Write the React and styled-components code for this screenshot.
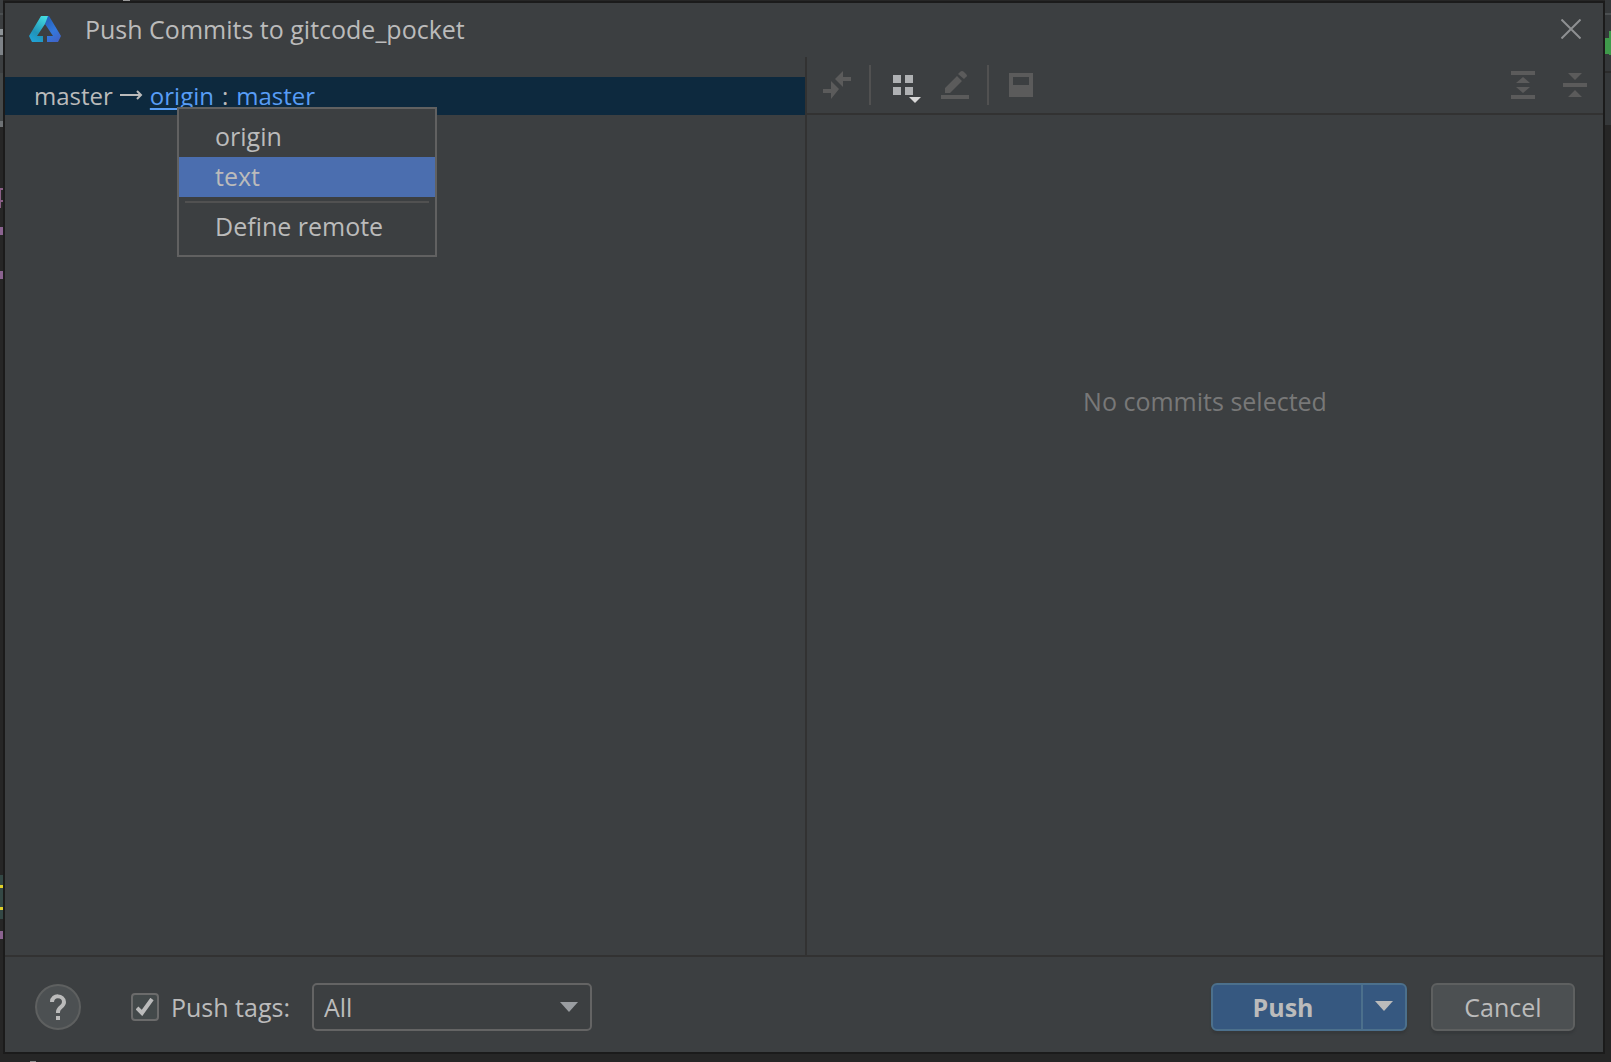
import React, { useState } from 'react';
import styled, { createGlobalStyle } from 'styled-components';

const GlobalStyle = createGlobalStyle`
  * {
    box-sizing: border-box;
  }

  body {
    margin: 0;
    background: #262626;
    color: #bbbbbb;
    font-family: 'Open Sans', 'Noto Sans', sans-serif;
    font-size: 25px;
    line-height: 32px;
  }

  button,
  select,
  input {
    margin: 0;
    font: inherit;
    color: inherit;
  }
`;

/* slivers of the editor that stay visible round the dialog */
const Backdrop = styled.div`
  display: flex;
  min-height: 100vh;
  padding: 1px 6px 8px 3px;
  background:
    linear-gradient(#9a9a9a, #9a9a9a) 123px 0 / 7px 1px no-repeat,
    linear-gradient(#8a8a8a, #8a8a8a) 30px 100% / 6px 1px no-repeat,
    linear-gradient(#4b4f51, #4b4f51) 0 13px / 3px 2px no-repeat,
    linear-gradient(#8d9397, #8d9397) 0 29px / 3px 6px no-repeat,
    linear-gradient(#7d8287, #7d8287) 0 37px / 3px 18px no-repeat,
    linear-gradient(#45494a, #45494a) 0 73px / 3px 48px no-repeat,
    linear-gradient(#6e7275, #6e7275) 0 121px / 3px 6px no-repeat,
    linear-gradient(#8a5f86, #8a5f86) 0 190px / 1px 18px no-repeat,
    linear-gradient(#8a5f86, #8a5f86) 0 188px / 3px 2px no-repeat,
    linear-gradient(#8a5f86, #8a5f86) 0 200px / 3px 2px no-repeat,
    linear-gradient(#8a6390, #8a6390) 0 227px / 3px 8px no-repeat,
    linear-gradient(#8a6390, #8a6390) 0 271px / 3px 8px no-repeat,
    linear-gradient(#e0d02a, #e0d02a) 0 885px / 3px 3px no-repeat,
    linear-gradient(#e0d02a, #e0d02a) 0 907px / 3px 3px no-repeat,
    linear-gradient(#344845, #344845) 0 875px / 3px 44px no-repeat,
    linear-gradient(#8a6390, #8a6390) 0 931px / 3px 8px no-repeat,
    linear-gradient(#3c3f41, #3c3f41) 0 0 / 3px 127px no-repeat,
    linear-gradient(#3f9a4b, #3f9a4b) 100% 31px / 2px 24px no-repeat,
    linear-gradient(#3f9a4b, #3f9a4b) 100% 38px / 6px 16px no-repeat,
    linear-gradient(#4b4f51, #4b4f51) 100% 13px / 6px 2px no-repeat,
    linear-gradient(#2b2b2b, #2b2b2b) 100% 71px / 6px 2px no-repeat,
    linear-gradient(#35383a, #35383a) 100% 0 / 6px 125px no-repeat,
    #262626;
`;

const Dialog = styled.main`
  flex: 1;
  display: flex;
  flex-direction: column;
  border: 2px solid #1b1b1b;
  background: #3c3f41;
`;

const TitleBar = styled.header`
  display: flex;
  align-items: center;
  height: 54px;
  padding: 0 22px 2px 24px;
`;

const Title = styled.h1`
  flex: 1;
  margin: 0 0 0 24px;
  font-size: 25px;
  font-weight: 400;
`;

const IconButton = styled.button`
  display: flex;
  padding: 0;
  border: 0;
  background: none;
  color: ${({ $active }) => ($active ? '#afb1b3' : '#5b5b5b')};
`;

const CloseButton = styled(IconButton)`
  color: #8e9092;
`;

const Panes = styled.div`
  flex: 1;
  display: grid;
  grid-template-columns: 400fr 399fr;
`;

const RepoPane = styled.section`
  padding-top: 20px;
`;

const RepoRow = styled.div`
  position: relative;
  display: flex;
  align-items: center;
  gap: 7px;
  height: 38px;
  padding-left: 29px;
  background: #0d293e;
  font-size: 24px;
`;

const Target = styled.span`
  display: flex;
  gap: 8px;
`;

const BranchLink = styled.a`
  color: #589df6;
  text-decoration: ${({ $underlined }) => ($underlined ? 'underline' : 'none')};
  text-decoration-thickness: 2px;
  text-underline-offset: 3px;
  text-decoration-skip-ink: none;
`;

const Menu = styled.div`
  position: absolute;
  z-index: 1;
  top: 30px;
  left: 172px;
  width: 260px;
  padding: 8px 0;
  border: 2px solid #616161;
  background: #3c3f41;
  font-size: 25px;
`;

const MenuItem = styled.button`
  display: block;
  width: 100%;
  height: 40px;
  padding: 0 36px 2px;
  border: 0;
  background: ${({ $selected }) => ($selected ? '#4b6eaf' : 'none')};
  text-align: left;
`;

const MenuSeparator = styled.hr`
  height: 2px;
  margin: 4px 6px;
  border: 0;
  background: #515151;
`;

const CommitPane = styled.section`
  display: flex;
  flex-direction: column;
  border-left: 2px solid #323232;
`;

const Toolbar = styled.div`
  display: flex;
  align-items: center;
  height: 58px;
  padding: 0 12px 0 14px;
  border-bottom: 2px solid #323232;
`;

const ToolbarGroup = styled.div`
  display: flex;
  gap: 20px;
`;

const ToolbarSeparator = styled.span`
  width: 2px;
  height: 40px;
  margin: 0 16px;
  background: #515151;
`;

const Spacer = styled.span`
  flex: 1;
`;

const EmptyText = styled.p`
  margin: 270px 0 0;
  color: #787878;
  text-align: center;
`;

const Footer = styled.footer`
  display: flex;
  align-items: center;
  height: 97px;
  padding: 5px 28px 0 30px;
  border-top: 2px solid #323232;
`;

const HelpButton = styled.button`
  display: flex;
  align-items: center;
  justify-content: center;
  width: 46px;
  height: 46px;
  margin-right: 50px;
  padding: 0;
  border: 2px solid #5e6060;
  border-radius: 50%;
  background: #4c5052;
`;

const Checkbox = styled.input`
  appearance: none;
  width: 28px;
  height: 28px;
  border: 2px solid #6b6b6b;
  border-radius: 4px;
  background: #43494a;
`;

const CheckHolder = styled.span`
  display: grid;

  > * {
    grid-area: 1 / 1;
    place-self: center;
  }

  svg {
    pointer-events: none;
  }
`;

const CheckLabel = styled.label`
  margin: 0 22px 0 12px;
`;

const SelectHolder = styled.span`
  display: grid;
  align-items: center;

  > * {
    grid-area: 1 / 1;
  }

  svg {
    justify-self: end;
    margin-right: 14px;
    pointer-events: none;
  }
`;

const Select = styled.select`
  appearance: none;
  width: 280px;
  height: 48px;
  padding: 0 40px 0 10px;
  border: 2px solid #646464;
  border-radius: 5px;
  background: #3c3f41;
`;

const SplitButton = styled.div`
  display: flex;
  height: 48px;
  border: 2px solid #4c708c;
  border-radius: 6px;
  background: #365880;
  box-shadow: 0 3px 2px #36393b;
`;

const PushButton = styled.button`
  width: 148px;
  padding: 0 8px 0 0;
  border: 0;
  background: none;
  font-weight: 700;
`;

const PushMore = styled.button`
  display: flex;
  align-items: center;
  justify-content: center;
  width: 44px;
  padding: 0 0 2px;
  border: 0;
  border-left: 2px solid #4c708c;
  background: none;
`;

const CancelButton = styled.button`
  width: 144px;
  height: 48px;
  margin-left: 24px;
  padding: 0;
  border: 2px solid #5e6060;
  border-radius: 6px;
  background: #4c5052;
  box-shadow: 0 3px 2px #36393b;
`;

const Logo = () => (
  <svg width="32" height="26" viewBox="0 0 32 26" aria-hidden="true">
    <defs>
      <linearGradient id="left" x1="0.7" y1="0" x2="0.2" y2="1">
        <stop offset="0" stopColor="#43dbe0" />
        <stop offset="0.65" stopColor="#2193b8" />
        <stop offset="1" stopColor="#20a3d8" />
      </linearGradient>
      <linearGradient id="right" x1="0.2" y1="0" x2="0.7" y2="1">
        <stop offset="0" stopColor="#2360b8" />
        <stop offset="0.6" stopColor="#3478dc" />
        <stop offset="1" stopColor="#4064c8" />
      </linearGradient>
    </defs>
    <path d="M12 0h7l1 2L8 20h6v6H3L0 20z" fill="url(#left)" />
    <path d="M19 0h1l12 20-3 6H18v-6h6L16 8z" fill="url(#right)" />
  </svg>
);

const CloseIcon = () => (
  <svg width="20" height="20" viewBox="0 0 20 20" stroke="currentColor" strokeWidth="2">
    <path d="M.5.5l19 19M19.5.5l-19 19" />
  </svg>
);

const ArrowRight = () => (
  <svg width="23" height="12" viewBox="0 0 23 12" fill="none" stroke="currentColor" strokeWidth="2">
    <path d="M0 5h21M17 1l4 4-4 4" />
  </svg>
);

const DiffIcon = () => (
  <svg width="32" height="32" viewBox="0 0 32 32" fill="currentColor">
    <path d="M14 10L22 2v6h8v4h-8v6zM2 20h8v-8l8 8-8 10v-6H2z" />
  </svg>
);

const GroupIcon = () => (
  <svg width="32" height="32" viewBox="0 0 32 32" fill="currentColor" overflow="visible">
    <path d="M6 6h8v8H6zM18 6h8v8h-8zM6 18h8v8H6zM18 18h8v8h-8z" />
    <path d="M22 28h12l-6 6z" fill="#d8d8d8" />
  </svg>
);

const EditIcon = () => (
  <svg width="32" height="32" viewBox="0 0 32 32" fill="currentColor">
    <path d="M6 19L18 7l5 5-12 12H6zM19 5l2-2q2-2 4 0l2 2q2 2 0 3l-2 2zM2 26h28v4H2z" />
  </svg>
);

const PreviewIcon = () => (
  <svg width="32" height="32" viewBox="0 0 32 32" fill="currentColor" fillRule="evenodd">
    <path d="M4 4h24v24H4zM8 8v8h16V8z" />
  </svg>
);

const ExpandIcon = () => (
  <svg width="32" height="32" viewBox="0 0 32 32" fill="currentColor">
    <path d="M4 2h24v4H4zM4 26h24v4H4zM16 8l7 6H9zM9 18h14l-7 6z" />
  </svg>
);

const CollapseIcon = () => (
  <svg width="32" height="32" viewBox="0 0 32 32" fill="currentColor">
    <path d="M4 14h24v4H4zM9 4h14l-7 7zM16 21l7 7H9z" />
  </svg>
);

const HelpIcon = () => (
  <svg width="18" height="26" viewBox="0 0 18 26" fill="none" stroke="currentColor" strokeWidth="4">
    <path d="M3 8c0-8 12-7 12 0 0 5-6 5-6 10v1M9 22v4" />
  </svg>
);

const CheckIcon = () => (
  <svg width="18" height="18" viewBox="0 0 18 18" fill="none" stroke="currentColor" strokeWidth="4">
    <path d="M1 10l5 5L16 1" />
  </svg>
);

const Caret = ({ color = 'currentColor' }) => (
  <svg width="18" height="10" viewBox="0 0 18 10" fill={color}>
    <path d="M0 0h18l-9 10z" />
  </svg>
);

const App = () => {
  const [pushTags, setPushTags] = useState(true);

  return (
    <>
      <GlobalStyle />
      <Backdrop>
        <Dialog>
          <TitleBar>
            <Logo />
            <Title>Push Commits to gitcode_pocket</Title>
            <CloseButton aria-label="Close">
              <CloseIcon />
            </CloseButton>
          </TitleBar>

          <Panes>
            <RepoPane>
              <RepoRow>
                <span>master</span>
                <ArrowRight />
                <Target>
                  <BranchLink href="#origin" $underlined>origin</BranchLink>
                  <span>:</span>
                  <BranchLink href="#master">master</BranchLink>
                </Target>
                <Menu role="menu">
                  <MenuItem role="menuitem">origin</MenuItem>
                  <MenuItem role="menuitem" $selected>text</MenuItem>
                  <MenuSeparator />
                  <MenuItem role="menuitem">Define remote</MenuItem>
                </Menu>
              </RepoRow>
            </RepoPane>

            <CommitPane>
              <Toolbar>
                <IconButton aria-label="Show diff"><DiffIcon /></IconButton>
                <ToolbarSeparator />
                <ToolbarGroup>
                  <IconButton aria-label="Group by" $active><GroupIcon /></IconButton>
                  <IconButton aria-label="Edit"><EditIcon /></IconButton>
                </ToolbarGroup>
                <ToolbarSeparator />
                <IconButton aria-label="Preview"><PreviewIcon /></IconButton>
                <Spacer />
                <ToolbarGroup>
                  <IconButton aria-label="Expand all"><ExpandIcon /></IconButton>
                  <IconButton aria-label="Collapse all"><CollapseIcon /></IconButton>
                </ToolbarGroup>
              </Toolbar>
              <EmptyText>No commits selected</EmptyText>
            </CommitPane>
          </Panes>

          <Footer>
            <HelpButton aria-label="Help"><HelpIcon /></HelpButton>
            <CheckHolder>
              <Checkbox
                id="push-tags"
                type="checkbox"
                checked={pushTags}
                onChange={(e) => setPushTags(e.target.checked)}
              />
              {pushTags && <CheckIcon />}
            </CheckHolder>
            <CheckLabel htmlFor="push-tags">Push tags:</CheckLabel>
            <SelectHolder>
              <Select aria-label="Tags to push" defaultValue="All">
                <option>All</option>
                <option>Current Branch</option>
              </Select>
              <Caret color="#9a9da1" />
            </SelectHolder>
            <Spacer />
            <SplitButton>
              <PushButton>Push</PushButton>
              <PushMore aria-label="More push options"><Caret /></PushMore>
            </SplitButton>
            <CancelButton>Cancel</CancelButton>
          </Footer>
        </Dialog>
      </Backdrop>
    </>
  );
};

export default App;
